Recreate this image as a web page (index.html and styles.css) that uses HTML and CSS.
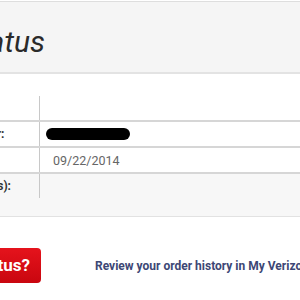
FILE: index.html
```html
<!DOCTYPE html>
<html lang="en">
<head>
<meta charset="utf-8">
<title>Order Status</title>
<link rel="stylesheet" href="styles.css">
</head>
<body>
<div class="page">
  <header class="header">
    <h1 class="title">Order Status</h1>
  </header>
  <section class="details">
    <div class="row">
      <div class="label"></div>
      <div class="value"></div>
    </div>
    <div class="row">
      <div class="label">Account Number:</div>
      <div class="value"><span class="redacted"></span></div>
    </div>
    <div class="row">
      <div class="label">Order Date:</div>
      <div class="value">09/22/2014</div>
    </div>
    <div class="row row-last">
      <div class="label">Mobile Number(s):</div>
      <div class="value"></div>
    </div>
  </section>
  <div class="actions">
    <a class="btn" href="#">Check Status?</a>
    <a class="link" href="#">Review your order history in My Verizon</a>
  </div>
</div>
</body>
</html>
```
FILE: styles.css
```css
html, body {
  margin: 0;
  padding: 0;
  overflow: hidden;
  background: #fff;
}
body {
  font-family: Roboto, "Liberation Sans", sans-serif;
  width: 300px;
  height: 300px;
}
.page {
  margin-left: -160px;
  width: 600px;
  padding-top: 1px;
}
.header {
  background: #f5f5f5;
  border-top: 1px solid #dedede;
  border-bottom: 2px solid #e3e3e3;
  height: 70px;
  display: flex;
  align-items: center;
}
.title {
  margin: 8px 0 0 0;
  font-family: Roboto, "Liberation Sans", sans-serif;
  font-style: italic;
  font-weight: 400;
  font-size: 30px;
  color: #2a2a2a;
  width: 205px;
  text-align: right;
}
.details {
  margin-top: 22px;
  background: #f7f7f7;
  border-bottom: 1px solid #e2e2e2;
  padding-bottom: 18px;
}
.row {
  display: grid;
  grid-template-columns: 200px 1fr;
  height: 24px;
  background: #fff;
  border-bottom: 2px solid #d6d6d6;
}
.row-last {
  background: transparent;
  border-bottom: 0;
}
.label {
  font-size: 12px;
  font-weight: 700;
  color: #333;
  display: flex;
  align-items: center;
  padding-left: 70px;
  border-right: 1px solid #c8c8c8;
}
.value {
  font-size: 12.5px;
  color: #666;
  display: flex;
  align-items: center;
  padding-left: 13px;
}
.redacted {
  display: block;
  width: 84px;
  height: 12px;
  border-radius: 6px;
  background: #000;
  margin-left: -7px;
}
.actions {
  display: flex;
  align-items: center;
  margin-top: 31px;
}
.btn {
  display: block;
  width: 201px;
  height: 35px;
  box-sizing: border-box;
  border-radius: 4px;
  background: linear-gradient(#e5131c, #c9060f);
  color: #fff;
  font-weight: 700;
  font-size: 17px;
  line-height: 35px;
  text-align: right;
  padding-right: 11px;
  text-decoration: none;
}
.link {
  margin-left: 54px;
  color: #3d4775;
  font-weight: 700;
  font-size: 12px;
  text-decoration: none;
  white-space: nowrap;
}
```
